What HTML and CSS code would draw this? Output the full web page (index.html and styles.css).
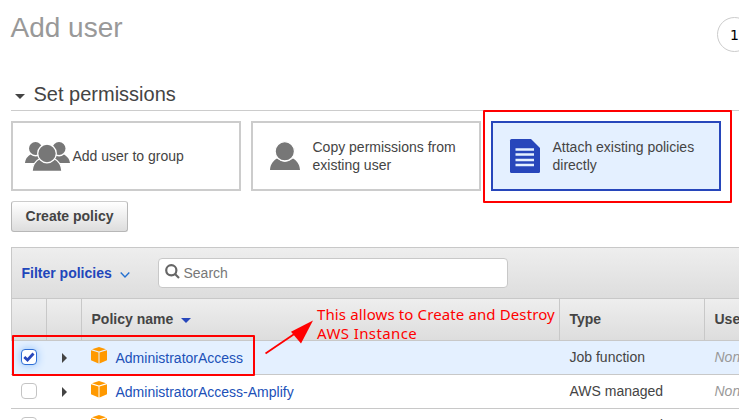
FILE: index.html
```html
<!DOCTYPE html>
<html lang="en">
<head>
<meta charset="utf-8">
<title>Add user</title>
<link rel="stylesheet" href="styles.css">
</head>
<body>
<svg class="defs" width="0" height="0" aria-hidden="true">
  <symbol id="cube" viewBox="0 0 16 17">
    <path d="M8 0 15 2.200 8 4.400 1 2.200ZM0 3.200 7.500 5.500V16.600L0 13.300ZM16 3.200 8.500 5.500V16.600L16 13.300Z"/>
  </symbol>
</svg>
<main class="page">
  <header class="top">
    <h1>Add user</h1>
    <span class="step">1</span>
  </header>
  <h2 class="section"><i class="caret"></i>Set permissions</h2>
  <div class="options">
    <div class="card">
      <svg class="icon group" viewBox="0 0 45 29" width="45" height="29">
        <circle cx="10.500" cy="6.500" r="6.500"/><circle cx="34" cy="6.500" r="6.500"/>
        <path d="M0 21C.6 16.500 2.500 14.500 5.500 12.500Q10 16 16 13V21ZM45 21C44.400 16.500 42 14.500 39 12.500Q35 16 29 13V21Z"/>
        <path class="cut" d="M7 29.500C7.500 22 11 18.500 15 16.500Q22 23 29 16.500C33 18.500 36.500 22 37 29.500Z"/>
        <circle class="cut" cx="22" cy="11.500" r="9.300"/>
      </svg>
      <span>Add user to group</span>
    </div>
    <div class="card">
      <svg class="icon" viewBox="0 0 30 28" width="30" height="28">
        <path d="M0 28C.4 21.500 3.500 18.500 7 16.400Q15 23 23 16.400C26.500 18.500 29.600 21.500 30 28Z"/>
        <circle class="cut" cx="14.800" cy="9.300" r="9.700"/>
      </svg>
      <span>Copy permissions from existing user</span>
    </div>
    <div class="card selected">
      <svg class="icon" viewBox="0 0 30 34" width="30" height="34">
        <path d="M1.500 0H21L30 9V32.500Q30 34 28.500 34H1.500Q0 34 0 32.500V1.500Q0 0 1.500 0Z"/>
        <path class="lines" d="M5.500 10.500H24M5.500 15.500H24M5.500 21H24M5.500 26H24"/>
      </svg>
      <span>Attach existing policies directly</span>
    </div>
  </div>
  <button class="create">Create policy</button>
  <section class="policies">
    <div class="toolbar">
      <span class="filter">Filter policies<svg width="10" height="6" viewBox="0 0 10 6"><path d="M.7.6 5 4.900 9.300.6"/></svg></span>
      <div class="search">
        <svg width="15" height="15" viewBox="0 0 15 15"><circle cx="6.300" cy="6.300" r="5.100"/><path d="M10 10 14 14"/></svg>
        <span>Search</span>
      </div>
    </div>
    <div class="row head">
      <div></div><div></div>
      <div>Policy name<i class="sort"></i></div>
      <div>Type</div>
      <div>Used as</div>
    </div>
    <div class="row active">
      <div><span class="check on"><svg width="12" height="10" viewBox="0 0 12 10"><path d="M1.300 5 4.500 8 10.500 1.500"/></svg></span></div>
      <div><i class="expand"></i></div>
      <div><svg class="cube" width="16" height="17"><use href="#cube"/></svg><a>AdministratorAccess</a></div>
      <div>Job function</div>
      <div class="none">None</div>
    </div>
    <div class="row">
      <div><span class="check"></span></div>
      <div><i class="expand"></i></div>
      <div><svg class="cube" width="16" height="17"><use href="#cube"/></svg><a>AdministratorAccess-Amplify</a></div>
      <div>AWS managed</div>
      <div class="none">None</div>
    </div>
    <div class="row">
      <div><span class="check"></span></div>
      <div><i class="expand"></i></div>
      <div><svg class="cube" width="16" height="17"><use href="#cube"/></svg></div>
      <div>AWS managed</div>
      <div class="none">None</div>
    </div>
  </section>
  <div class="mark mark-card"></div>
  <div class="mark mark-row"></div>
  <svg class="arrow" width="50" height="36" viewBox="0 0 50 36">
    <path class="shaft" d="M1.500 34.500 34 12.500"/><path d="M49 1.500 27 12.800 37 24.500Z"/>
  </svg>
  <p class="note">This allows to Create and Destroy<br><span>AWS Instance</span></p>
</main>
</body>
</html>
```

FILE: styles.css
```css
* { box-sizing: border-box; }
body {
  margin: 0;
  background: #fff;
  color: #444;
  font: 14px/18px "Liberation Sans", Arial, sans-serif;
}
.defs { position: absolute; }
.page {
  position: relative;
  width: 739px;
  height: 420px;
  overflow: hidden;
  padding-left: 11px;
}
.top {
  display: flex;
  justify-content: space-between;
  height: 78px;
  padding-top: 11px;
}
h1 {
  margin: 1px 0 0 -0.5px;
  color: #999;
  font-size: 28px;
  font-weight: 400;
  line-height: 32px;
}
.step {
  flex: none;
  width: 35px;
  height: 35px;
  margin: 6px -13px 0 0;
  border: 1px solid #ccc;
  border-radius: 50%;
  color: #000;
  font: 14px/34px "DejaVu Sans", sans-serif;
  text-align: center;
}
.section {
  display: flex;
  align-items: center;
  gap: 8.5px;
  height: 33px;
  margin: 0;
  padding-left: 4px;
  border-bottom: 1px solid #ccc;
  font-size: 20px;
  font-weight: 400;
}
.caret, .sort {
  border: 5px solid transparent;
  border-top: 5px solid #444;
  border-bottom: 0;
}
.caret { margin-top: 5px; }
.options {
  display: flex;
  gap: 10px;
  margin-top: 10px;
}
.card {
  display: flex;
  align-items: center;
  width: 230px;
  height: 70px;
  padding: 0 16px 0 17px;
  border: 2px solid #ccc;
}
.card span { flex: 1; }
.icon {
  flex: none;
  margin-right: 12.5px;
  fill: #777;
  overflow: visible;
}
.icon.group { margin: 0 2.5px 0 -5px; }
.cut { stroke: #fff; stroke-width: 1.3px; }
.selected {
  border-color: #2746bb;
  background: #e4f0ff;
}
.selected .icon { fill: #2746bb; }
.selected .lines { stroke: #e4f0ff; stroke-width: 2.6px; }
.create {
  display: block;
  width: 117px;
  height: 31px;
  margin: 10px 0 15px;
  padding: 0 0 2px;
  border: 1px solid #b7b7b7;
  border-top-color: #ccc;
  border-radius: 3px;
  background: linear-gradient(#fff, #ddd);
  color: #444;
  font: bold 14px/18px "Liberation Sans", Arial, sans-serif;
}
.policies {
  border-top: 1px solid #c8c8c8;
}
.toolbar {
  display: flex;
  align-items: center;
  height: 50px;
  padding-left: 9.5px;
  border-left: 1px solid #c8c8c8;
  background: linear-gradient(#eee, #ddd);
}
.filter {
  width: 136.5px;
  color: #2146bb;
  font-weight: bold;
}
.filter svg {
  margin-left: 8px;
  fill: none;
  stroke: #2470d0;
  stroke-width: 1.4px;
}
.search {
  display: flex;
  align-items: center;
  gap: 3.5px;
  width: 350px;
  height: 30px;
  padding-left: 6px;
  border: 1px solid #c8c8c8;
  border-radius: 4px;
  background: #fff;
  color: #777;
}
.search svg {
  margin-top: -3px;
  fill: none;
  stroke: #666;
  stroke-width: 2.2px;
}
.row {
  display: grid;
  grid-template-columns: 35px 35px 478px 145px 145px;
  height: 34px;
  border-bottom: 1px solid #c8c8c8;
}
.row > div {
  display: flex;
  align-items: center;
  padding: 0 0 2px 10px;
  white-space: nowrap;
}
.row > div:nth-child(n+4) { padding-left: 10.5px; }
.row.head {
  height: 43px;
  border-top: 1px solid #c8c8c8;
  background: linear-gradient(#eee, #ddd);
  font-weight: bold;
}
.head > div { border-left: 1px solid #c8c8c8; }
.row.head > div:nth-child(n+3) { padding-left: 9.5px; }
.sort {
  margin: 3px 0 0 8px;
  border-top-color: #2746bb;
}
.row.active { background: #e4f0ff; }
.check {
  display: flex;
  align-items: center;
  justify-content: center;
  width: 16px;
  height: 16px;
  border: 1px solid #c4c4c4;
  border-radius: 4px;
  background: #fff;
}
.check.on {
  border-color: #2f6fd6;
  box-shadow: 0 0 8px #8fc0fa;
}
.check path {
  fill: none;
  stroke: #2746bb;
  stroke-width: 2.8px;
}
.expand {
  margin: 2px 0 0 6px;
  border: 5px solid transparent;
  border-left: 5px solid #444;
  border-right: 0;
}
.cube {
  margin: -2px 8.5px 0 0;
  fill: #f90;
}
.row a {
  margin-top: 2px;
  color: #2050b8;
}
.none { color: #999; font-style: italic; }
.mark {
  position: absolute;
  border: 2px solid #f00;
  border-radius: 1px;
}
.mark-card { left: 483px; top: 110px; width: 249px; height: 93px; }
.mark-row { left: 12px; top: 335px; width: 243px; height: 41px; }
.arrow {
  position: absolute;
  left: 264px;
  top: 319px;
  fill: #f00;
}
.shaft { stroke: #f00; stroke-width: 1.8px; }
.note {
  position: absolute;
  left: 317px;
  top: 305px;
  margin: 0;
  color: #f00;
  font: 15px/19px "Noto Sans", sans-serif;
  letter-spacing: 0.12px;
  white-space: nowrap;
}
.note span { letter-spacing: 0.4px; }
```
